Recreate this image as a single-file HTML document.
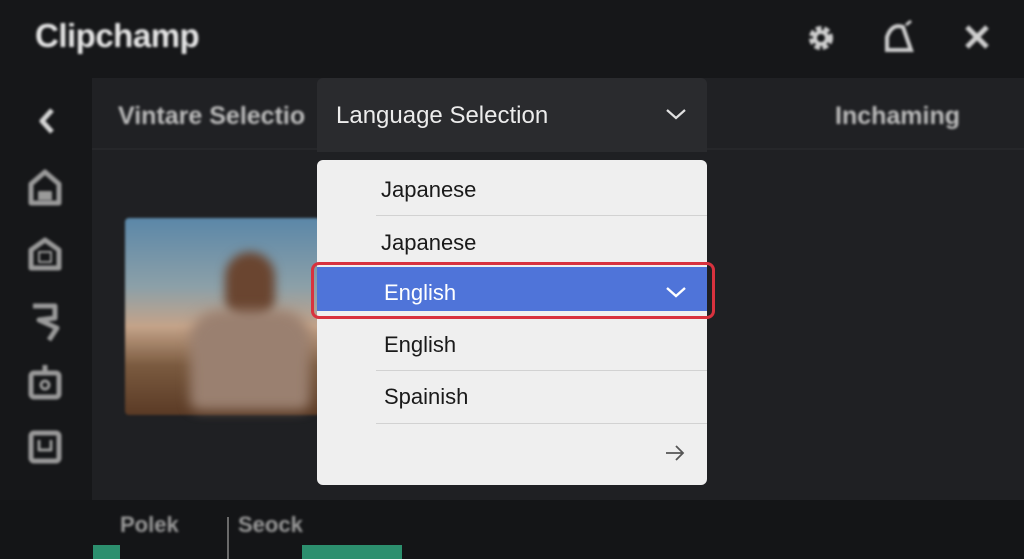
<!DOCTYPE html>
<html><head><style>
*{margin:0;padding:0;box-sizing:border-box}
body{width:1024px;height:559px;background:#161719;font-family:"Liberation Sans",sans-serif;position:relative;overflow:hidden}
.a{position:absolute}
.blur{filter:blur(1.2px)}
</style></head><body>
<div class="a blur" style="left:35px;top:17px;font-size:33px;font-weight:bold;color:#e6e6e6;letter-spacing:-0.5px">Clipchamp</div>
<!-- top right icons -->
<svg class="a blur" style="left:800px;top:15px" width="210" height="45" fill="none" stroke="#d0d0d0" stroke-width="5">
<circle cx="21" cy="23" r="9" stroke-dasharray="5 2.5" stroke-width="6"/><circle cx="21" cy="23" r="6" stroke-width="4"/>
<path d="M87 35 L87 22 Q92 8 103 12 L111 35 Z" stroke-width="4"/><path d="M106 10 l5 -4" stroke-width="3"/>
<path d="M167 12 L187 32 M187 12 L167 32"/>
</svg>
<!-- main panel -->
<div class="a" style="left:92px;top:78px;width:932px;height:422px;background:#1f2023"></div>
<div class="a" style="left:92px;top:78px;width:932px;height:72px;background:#202124;border-bottom:2px solid #26272a"></div>
<div class="a blur" style="left:118px;top:102px;font-size:25px;color:#bdbdbd;font-weight:bold">Vintare Selectio</div>
<div class="a blur" style="left:835px;top:102px;font-size:25px;color:#bdbdbd;font-weight:bold">Inchaming</div>
<!-- sidebar icons -->
<svg class="a blur" style="left:25px;top:100px" width="45" height="370" fill="none" stroke="#9a9a9a" stroke-width="5" stroke-linejoin="round">
<path d="M27 10 L17 21 L27 32" stroke="#d6d6d6"/>
<path d="M6 103 L6 84 L20 72 L34 84 L34 103 Z"/><path d="M14 100 v-8 h12 v8" fill="#9a9a9a" stroke-width="2"/>
<path d="M6 168 L6 150 L20 140 L34 150 L34 168 Z"/><rect x="14" y="152" width="12" height="10" stroke-width="2"/>
<path d="M8 206 L30 206 L30 218 L14 220 L32 228 L24 240"/>
<rect x="6" y="273" width="28" height="24" rx="3"/><path d="M20 265 v8"/><circle cx="20" cy="285" r="4" stroke-width="3"/>
<rect x="6" y="333" width="28" height="28" rx="3"/><path d="M14 340 v10 h12 v-10" stroke-width="3"/>
</svg>
<!-- photo -->
<div class="a blur" style="left:125px;top:218px;width:195px;height:197px;border-radius:4px;background:linear-gradient(180deg,#5b87a8 0%,#8ca0a8 35%,#c4a389 55%,#7a5a3f 75%,#5a3a25 100%)"></div>
<div class="a" style="left:225px;top:252px;width:50px;height:70px;border-radius:25px;background:#6a4530;filter:blur(5px)"></div>
<div class="a" style="left:190px;top:310px;width:120px;height:100px;border-radius:30px 30px 10px 10px;background:#9a8070;filter:blur(6px)"></div>
<!-- bottom -->
<div class="a" style="left:0;top:500px;width:1024px;height:59px;background:#141517"></div>
<div class="a blur" style="left:120px;top:512px;font-size:22px;color:#9a9a9a;font-weight:bold">Polek</div>
<div class="a" style="left:227px;top:517px;width:2px;height:42px;background:#6a6a6a"></div>
<div class="a blur" style="left:238px;top:512px;font-size:22px;color:#9a9a9a;font-weight:bold">Seock</div>
<div class="a" style="left:93px;top:545px;width:27px;height:14px;background:#2c8f6e"></div>
<div class="a" style="left:302px;top:545px;width:100px;height:14px;background:#2c8f6e"></div>
<!-- dropdown header -->
<div class="a" style="left:317px;top:78px;width:390px;height:74px;background:#2a2b2e;border-radius:6px 6px 0 0"></div>
<div class="a" style="left:336px;top:102px;font-size:24px;color:#ececec">Language Selection</div>
<svg class="a" style="left:664px;top:105px" width="24" height="18" fill="none" stroke="#e0e0e0" stroke-width="2.2"><path d="M3 5 L12 13 L21 5"/></svg>
<!-- menu -->
<div class="a" style="left:317px;top:160px;width:390px;height:325px;background:#efefef;border-radius:6px"></div>
<div class="a" style="left:381px;top:177px;font-size:22px;color:#1a1a1a">Japanese</div>
<div class="a" style="left:376px;top:215px;width:331px;height:1px;background:#d2d2d2"></div>
<div class="a" style="left:381px;top:230px;font-size:22px;color:#1a1a1a">Japanese</div>
<div class="a" style="left:317px;top:267px;width:390px;height:44px;background:#4f74d9"></div>
<div class="a" style="left:384px;top:280px;font-size:22px;color:#fff">English</div>
<svg class="a" style="left:664px;top:283px" width="24" height="18" fill="none" stroke="#fff" stroke-width="2.4"><path d="M3 5 L12 13 L21 5"/></svg>
<div class="a" style="left:384px;top:332px;font-size:22px;color:#1a1a1a">English</div>
<div class="a" style="left:376px;top:370px;width:331px;height:1px;background:#d2d2d2"></div>
<div class="a" style="left:384px;top:384px;font-size:22px;color:#1a1a1a">Spainish</div>
<div class="a" style="left:376px;top:423px;width:331px;height:1px;background:#d2d2d2"></div>
<svg class="a" style="left:664px;top:443px" width="22" height="20" fill="none" stroke="#555" stroke-width="1.8"><path d="M2 10 H19 M12 3 L19 10 L12 17"/></svg>
<!-- red outline -->
<div class="a" style="left:311px;top:262px;width:404px;height:57px;border:3px solid #d8323e;border-radius:8px"></div>
</body></html>
